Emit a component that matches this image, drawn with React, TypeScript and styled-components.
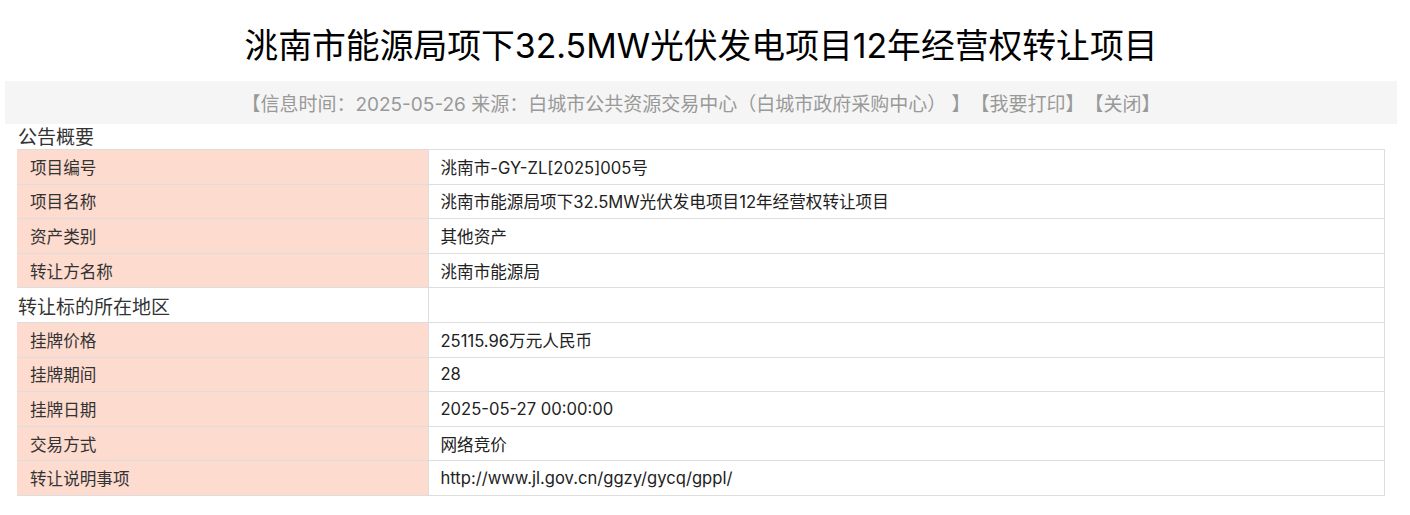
import React from 'react';
import styled, { createGlobalStyle } from 'styled-components';

const GlobalStyle = createGlobalStyle`
  body {
    margin: 0;
    background: #fff;
    font-family: Inter, "Noto Sans CJK SC", sans-serif;
    color: #333;
  }
`;

type Row = {
  label: string;
  value: string;
  section?: boolean;
};

const rows: Row[] = [
  { label: '项目编号', value: '洮南市-GY-ZL[2025]005号' },
  { label: '项目名称', value: '洮南市能源局项下32.5MW光伏发电项目12年经营权转让项目' },
  { label: '资产类别', value: '其他资产' },
  { label: '转让方名称', value: '洮南市能源局' },
  { label: '转让标的所在地区', value: '', section: true },
  { label: '挂牌价格', value: '25115.96万元人民币' },
  { label: '挂牌期间', value: '28' },
  { label: '挂牌日期', value: '2025-05-27 00:00:00' },
  { label: '交易方式', value: '网络竞价' },
  { label: '转让说明事项', value: 'http://www.jl.gov.cn/ggzy/gycq/gppl/' },
];

const Page = styled.div`
  width: 1410px;
  padding: 0 13px 0 5px;
  box-sizing: border-box;
`;

const Title = styled.h1`
  margin: 0;
  height: 81px;
  display: flex;
  align-items: center;
  justify-content: center;
  font-size: 33.8px;
  font-weight: normal;
  color: #000;
  padding-top: 6px;
  box-sizing: border-box;
`;

const InfoBar = styled.div`
  height: 43px;
  background: #f5f5f5;
  display: flex;
  align-items: center;
  justify-content: center;
  font-size: 19px;
  color: #999;
  white-space: pre;
`;

const InfoLink = styled.span`
  cursor: pointer;
`;

const Body = styled.div`
  padding-left: 12px;
`;

const SectionTitle = styled.div`
  height: 25px;
  font-size: 19px;
  line-height: 27px;
  color: #333;
  padding-left: 1px;
`;

const Table = styled.table`
  width: 1368px;
  border-collapse: collapse;
  table-layout: fixed;
  font-family: Inter, "Noto Sans CJK SC", sans-serif;
`;

const LabelCell = styled.td<{ $section?: boolean }>`
  width: 411px;
  height: 34.6px;
  box-sizing: border-box;
  padding: 0 0 0 ${p => (p.$section ? '1px' : '13px')};
  background: ${p => (p.$section ? '#fff' : '#fddbcf')};
  font-size: ${p => (p.$section ? '19px' : '16.6px')};
  color: #333;
  border-top: 1px solid #ddd;
  border-bottom: 1px solid #ddd;
  vertical-align: middle;
`;

const ValueCell = styled.td`
  height: 34.6px;
  box-sizing: border-box;
  padding: 0 0 0 12px;
  font-size: 16.6px;
  color: #222;
  border: 1px solid #ddd;
  vertical-align: middle;
`;

export default function App() {
  return (
    <Page>
      <GlobalStyle />
      <Title>洮南市能源局项下32.5MW光伏发电项目12年经营权转让项目</Title>
      <InfoBar>
        【信息时间：2025-05-26 来源：白城市公共资源交易中心（白城市政府采购中心） 】
        <InfoLink>【我要打印】</InfoLink>
        <InfoLink>【关闭】</InfoLink>
      </InfoBar>
      <Body>
        <SectionTitle>公告概要</SectionTitle>
        <Table>
          <tbody>
            {rows.map(r => (
              <tr key={r.label}>
                <LabelCell $section={r.section}>{r.label}</LabelCell>
                <ValueCell>{r.value}</ValueCell>
              </tr>
            ))}
          </tbody>
        </Table>
      </Body>
    </Page>
  );
}
